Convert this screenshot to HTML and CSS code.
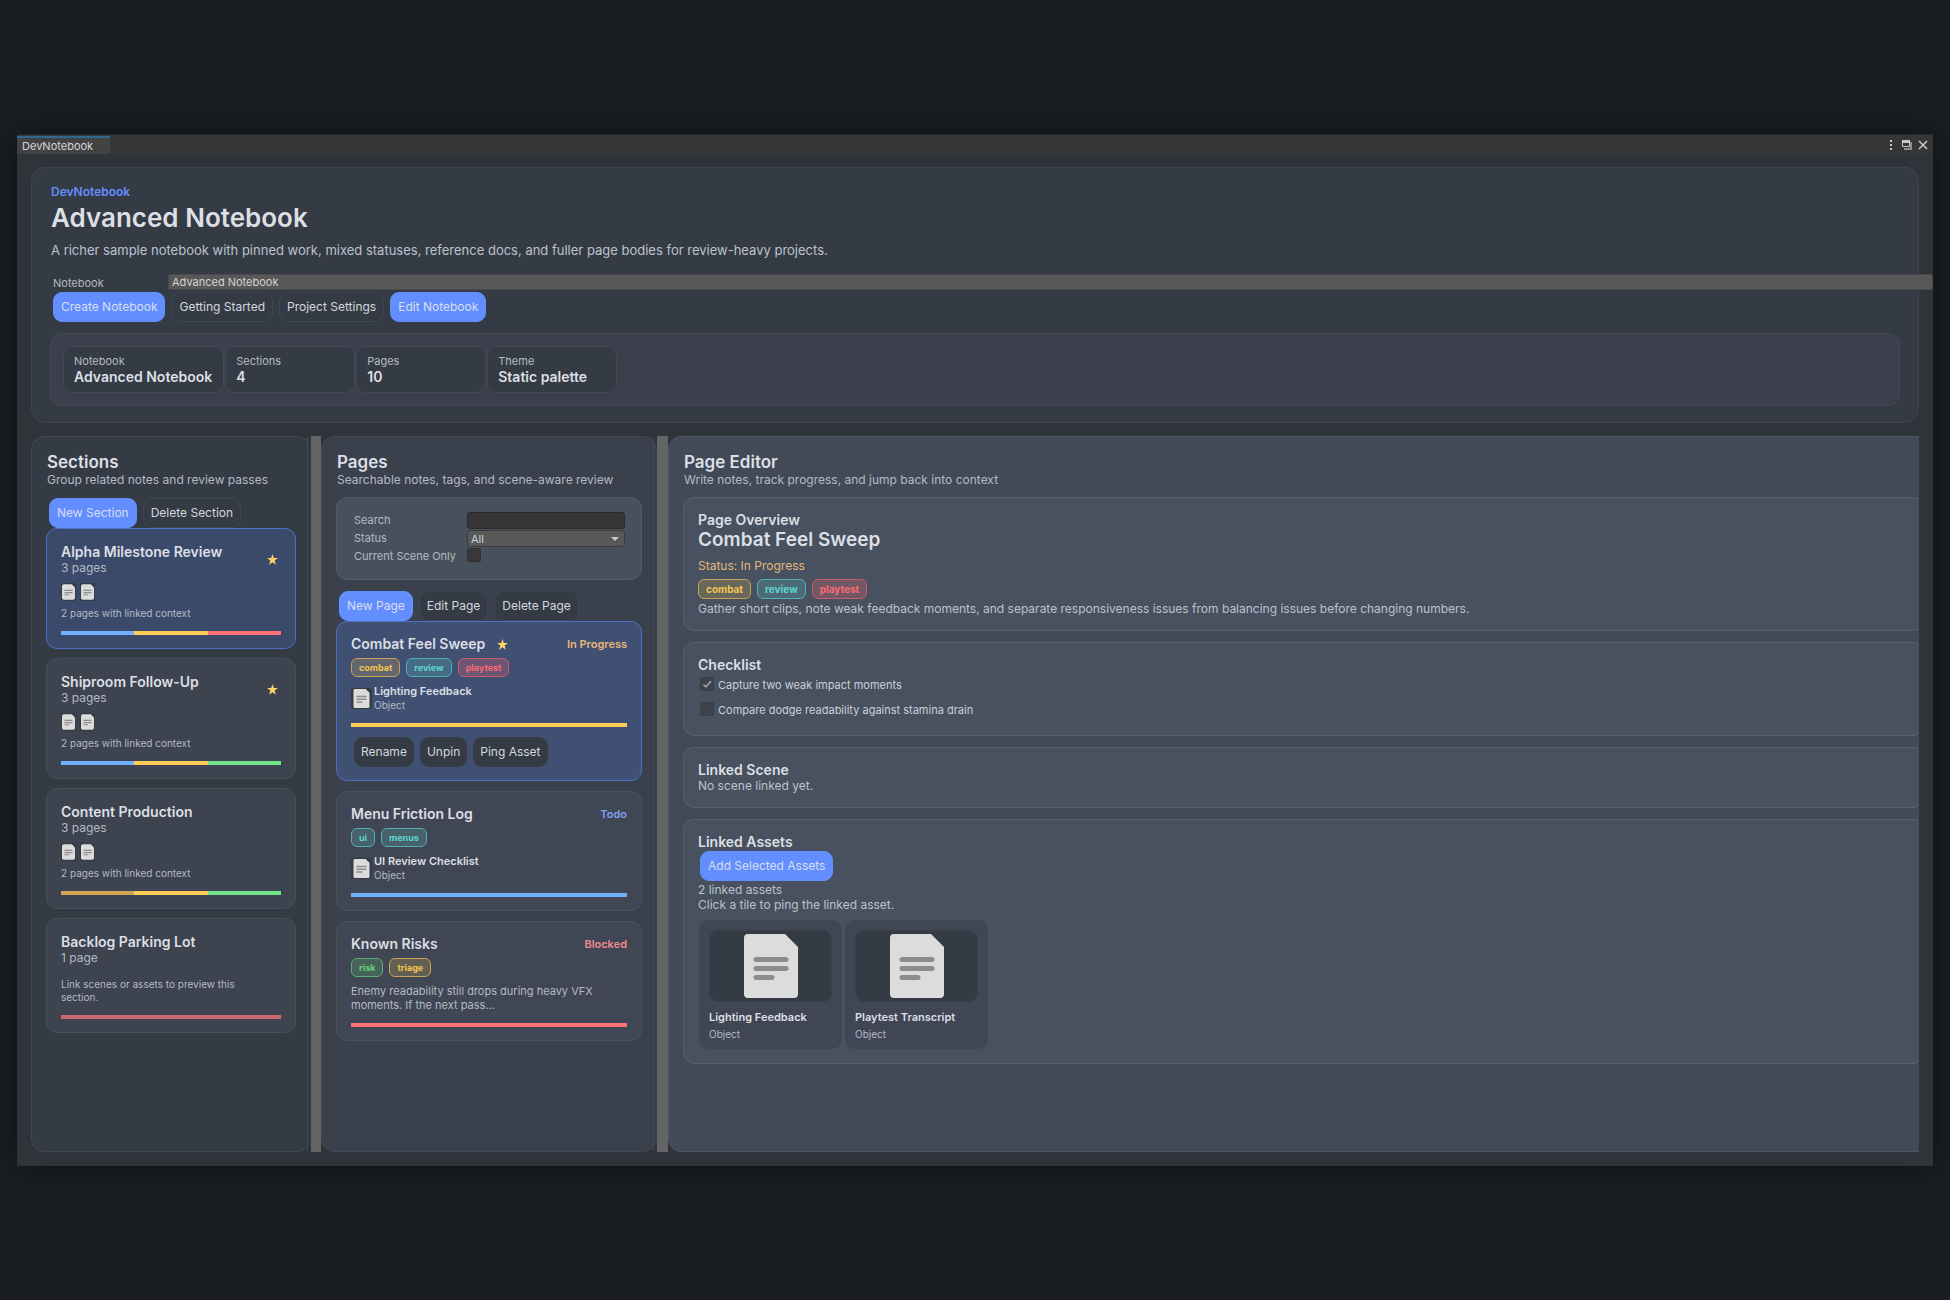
FILE: index.html
```html
<!DOCTYPE html>
<html lang="en">
<head>
<meta charset="utf-8">
<meta name="viewport" content="width=device-width, initial-scale=1">
<title>DevNotebook</title>
<link rel="stylesheet" href="styles.css">
</head>
<body>
<svg class="defs" aria-hidden="true">
  <symbol id="doc" viewBox="0 0 54 64">
    <path fill="#dcdcdc" d="M4 0H41L54 13V60a4 4 0 0 1-4 4H4a4 4 0 0 1-4-4V4a4 4 0 0 1 4-4Z"/>
    <path stroke="#8c8c8c" stroke-width="5" stroke-linecap="round" d="M12 25.500H42M12 34.500H42M12 43.500H28"/>
  </symbol>
  <symbol id="star" viewBox="0 0 24 24">
    <path fill="#ffd166" d="M12 0l2.900 8.900H24l-7.400 5.500L19.400 23.500 12 18l-7.400 5.500 2.800-9.100L0 8.900h9.100Z"/>
  </symbol>
</svg>
<div class="window">
  <div class="titlebar">
    <div class="tab">DevNotebook</div>
    <div class="window-actions">
      <button class="icon-button" type="button" aria-label="Menu"><svg width="10" height="12" viewBox="0 0 10 12"><path fill="#c8c8c8" d="M4 1h2v2H4zM4 5h2v2H4zM4 9h2v2H4z"/></svg></button>
      <button class="icon-button" type="button" aria-label="Maximize"><svg width="10" height="10" viewBox="0 0 10 10"><path fill="#8f8f8f" d="M8 2h2v8H2V8h6z"/><path fill="none" stroke="#c8c8c8" d="M.5.5h7v6h-7z"/><path fill="#c8c8c8" d="M0 0h8v3H0z"/></svg></button>
      <button class="icon-button" type="button" aria-label="Close"><svg width="10" height="10" viewBox="0 0 10 10"><path stroke="#c8c8c8" stroke-width="1.600" d="M1 1l8 8M9 1L1 9"/></svg></button>
    </div>
  </div>
  <div class="content">
    <header class="hero">
      <div class="intro">
        <p class="eyebrow">DevNotebook</p>
        <h1>Advanced Notebook</h1>
        <p class="lead">A richer sample notebook with pinned work, mixed statuses, reference docs, and fuller page bodies for review-heavy projects.</p>
      </div>
      <div class="notebook-field">
        <label for="notebook">Notebook</label>
        <select id="notebook" class="field"><option>Advanced Notebook</option></select>
      </div>
      <div class="buttons">
        <button class="btn primary" type="button">Create Notebook</button>
        <button class="btn" type="button">Getting Started</button>
        <button class="btn" type="button">Project Settings</button>
        <button class="btn primary" type="button">Edit Notebook</button>
      </div>
      <dl class="stats">
        <div class="stat"><dt>Notebook</dt><dd>Advanced Notebook</dd></div>
        <div class="stat"><dt>Sections</dt><dd>4</dd></div>
        <div class="stat"><dt>Pages</dt><dd>10</dd></div>
        <div class="stat"><dt>Theme</dt><dd>Static palette</dd></div>
      </dl>
    </header>

    <main class="workspace">
      <section class="panel sections">
        <div class="panel-body">
          <h2>Sections</h2>
          <p class="sub">Group related notes and review passes</p>
          <div class="buttons">
            <button class="btn primary" type="button">New Section</button>
            <button class="btn" type="button">Delete Section</button>
          </div>
          <div class="cards">
            <article class="card selected">
              <div class="card-head"><div><h3>Alpha Milestone Review</h3><p>3 pages</p></div><svg class="star"><use href="#star"/></svg></div>
              <div class="thumbs"><svg><use href="#doc"/></svg><svg><use href="#doc"/></svg></div>
              <p class="note">2 pages with linked context</p>
              <div class="bar"><i class="todo"></i><i class="progress"></i><i class="blocked"></i></div>
            </article>
            <article class="card">
              <div class="card-head"><div><h3>Shiproom Follow-Up</h3><p>3 pages</p></div><svg class="star"><use href="#star"/></svg></div>
              <div class="thumbs"><svg><use href="#doc"/></svg><svg><use href="#doc"/></svg></div>
              <p class="note">2 pages with linked context</p>
              <div class="bar"><i class="todo"></i><i class="progress"></i><i class="done"></i></div>
            </article>
            <article class="card">
              <div class="card-head"><div><h3>Content Production</h3><p>3 pages</p></div></div>
              <div class="thumbs"><svg><use href="#doc"/></svg><svg><use href="#doc"/></svg></div>
              <p class="note">2 pages with linked context</p>
              <div class="bar"><i class="progress dim"></i><i class="progress"></i><i class="done"></i></div>
            </article>
            <article class="card">
              <div class="card-head"><div><h3>Backlog Parking Lot</h3><p>1 page</p></div></div>
              <p class="note empty">Link scenes or assets to preview this section.</p>
              <div class="bar"><i class="blocked dim"></i></div>
            </article>
          </div>
        </div>
      </section>
      <div class="splitter"></div>

      <section class="panel pages">
        <div class="panel-body">
          <h2>Pages</h2>
          <p class="sub">Searchable notes, tags, and scene-aware review</p>
          <form class="filters">
            <label for="search">Search</label>
            <input id="search" class="text-input" type="text">
            <label for="status">Status</label>
            <span class="dropdown"><select id="status" class="field"><option>All</option></select></span>
            <label for="scene">Current Scene Only</label>
            <input id="scene" class="check" type="checkbox">
          </form>
          <div class="buttons">
            <button class="btn primary" type="button">New Page</button>
            <button class="btn" type="button">Edit Page</button>
            <button class="btn" type="button">Delete Page</button>
          </div>
          <div class="cards">
            <article class="card selected">
              <div class="page-head"><h3>Combat Feel Sweep</h3><svg class="star"><use href="#star"/></svg><span class="state amber">In Progress</span></div>
              <div class="tags"><span class="tag gold">combat</span><span class="tag teal">review</span><span class="tag red">playtest</span></div>
              <div class="asset-ref"><svg><use href="#doc"/></svg><div><strong>Lighting Feedback</strong><span>Object</span></div></div>
              <div class="bar"><i class="progress"></i></div>
              <div class="buttons card-actions">
                <button class="btn solid" type="button">Rename</button>
                <button class="btn solid" type="button">Unpin</button>
                <button class="btn solid" type="button">Ping Asset</button>
              </div>
            </article>
            <article class="card">
              <div class="page-head"><h3>Menu Friction Log</h3><span class="state blue">Todo</span></div>
              <div class="tags"><span class="tag teal">ui</span><span class="tag teal">menus</span></div>
              <div class="asset-ref"><svg><use href="#doc"/></svg><div><strong>UI Review Checklist</strong><span>Object</span></div></div>
              <div class="bar"><i class="todo"></i></div>
            </article>
            <article class="card">
              <div class="page-head"><h3>Known Risks</h3><span class="state pink">Blocked</span></div>
              <div class="tags"><span class="tag green">risk</span><span class="tag gold">triage</span></div>
              <p class="excerpt">Enemy readability still drops during heavy VFX moments. If the next pass...</p>
              <div class="bar"><i class="blocked"></i></div>
            </article>
          </div>
        </div>
      </section>
      <div class="splitter"></div>

      <section class="panel editor">
        <div class="panel-body">
          <h2>Page Editor</h2>
          <p class="sub">Write notes, track progress, and jump back into context</p>
          <div class="blocks">
            <section class="block">
              <h3>Page Overview</h3>
              <p class="page-title">Combat Feel Sweep</p>
              <p class="status-line">Status: In Progress</p>
              <div class="tags large"><span class="tag gold">combat</span><span class="tag teal">review</span><span class="tag red">playtest</span></div>
              <p class="body-text">Gather short clips, note weak feedback moments, and separate responsiveness issues from balancing issues before changing numbers.</p>
            </section>
            <section class="block checklist">
              <h3>Checklist</h3>
              <label><input class="check" type="checkbox" checked>Capture two weak impact moments</label>
              <label><input class="check" type="checkbox">Compare dodge readability against stamina drain</label>
            </section>
            <section class="block">
              <h3>Linked Scene</h3>
              <p>No scene linked yet.</p>
            </section>
            <section class="block linked-assets">
              <h3>Linked Assets</h3>
              <div class="buttons"><button class="btn primary" type="button">Add Selected Assets</button></div>
              <p>2 linked assets</p>
              <p>Click a tile to ping the linked asset.</p>
              <div class="tiles">
                <button class="tile" type="button"><span class="thumb"><svg><use href="#doc"/></svg></span><strong>Lighting Feedback</strong><span>Object</span></button>
                <button class="tile" type="button"><span class="thumb"><svg><use href="#doc"/></svg></span><strong>Playtest Transcript</strong><span>Object</span></button>
              </div>
            </section>
          </div>
        </div>
      </section>
    </main>
  </div>
</div>
</body>
</html>
```
FILE: styles.css
```css
* { box-sizing: border-box; }

body {
  margin: 0;
  min-height: 100vh;
  padding: 16px 17px;
  display: flex;
  align-items: center;
  background: #1a1e22;
  color: #d3d7de;
  font: 12px/16px Inter, "Liberation Sans", sans-serif;
}

h1, h2, h3, p, dl, dd { margin: 0; }
h1, h2, h3, strong { color: #dcdfe4; font-weight: 600; }
button, input, select { font: inherit; color: inherit; }
.defs { display: none; }

.window {
  flex: 1;
  min-width: 0;
  background: #2f343b;
  box-shadow: 0 0 28px rgba(0, 0, 0, .45);
  overflow: hidden;
}

/* Title bar */
.titlebar {
  display: flex;
  justify-content: space-between;
  height: 20px;
  background: #363636;
  border-top: 1px solid #292929;
}
.tab {
  width: 93px;
  margin-top: 1px;
  padding-left: 5px;
  border-top: 2px solid #30688f;
  background: #424242;
  font-size: 11px;
}
.window-actions {
  display: flex;
  align-items: center;
  gap: 6px;
  padding-right: 5px;
}
.icon-button {
  display: flex;
  padding: 0;
  border: 0;
  background: none;
}

.content { padding: 13px 14px 14px; }

/* Header card */
.hero {
  padding: 16px 18px;
  border: 1px solid #3f444f;
  border-radius: 14px;
  background: #353b45;
}
.intro { padding-left: 1px; }
.eyebrow { color: #628eff; font-weight: 600; }
h1 { font-size: 26px; line-height: 36px; }
.lead { margin-top: 6px; font-size: 13px; color: #bcc2cc; }
.notebook-field {
  display: grid;
  grid-template-columns: 115px 1fr;
  margin: 16px -33px 0 3px;
  font-size: 11px;
  line-height: 18px;
  color: #b4b9c1;
}
.field {
  width: 100%;
  height: 16px;
  padding: 0 3px;
  appearance: none;
  border: 1px solid #4a4a4a;
  border-radius: 2px;
  background: #585858;
  color: #d2d2d2;
  font-size: 11px;
  line-height: 14px;
}

/* Buttons */
.buttons {
  display: flex;
  gap: 6px;
  padding-left: 3px;
}
.btn {
  height: 30px;
  padding: 0 7px;
  border: 1px solid #404651;
  border-radius: 9px;
  background: #353b45;
  color: #d3d7de;
}
.btn.primary { border-color: #628eff; background: #628eff; color: #d9def0; }
.btn.solid { padding: 0 6px; border-color: #373c44; }

.stats {
  display: flex;
  gap: 1px;
  margin-top: 11px;
  padding: 12px;
  border: 1px solid #444a57;
  border-radius: 12px;
  background: #3b404c;
}
.stat {
  min-width: 130px;
  padding: 7px 11px 7px 10px;
  border: 1px solid #434956;
  border-radius: 9px;
  background: #353b45;
}
.stat dt { font-size: 11px; line-height: 15px; color: #b4bac5; }
.stat dd { font-size: 14px; font-weight: 600; color: #dcdfe4; }

/* Three-pane workspace */
.workspace {
  display: grid;
  grid-template-columns: 280px 10px 336px 11px minmax(0, 1fr);
  min-height: 716px;
  margin-top: 13px;
}
.splitter { background: #646464; }
.panel {
  display: flex;
  border: 1px solid #424854;
  border-right: 0;
  border-radius: 14px;
  padding-right: 3px;
  background: #353b45;
}
.panel-body {
  flex: 1;
  min-width: 0;
  padding: 15px 11px 15px 14px;
  border-right: 1px solid #424854;
}
.pages { background: #3a404c; }
.editor {
  padding: 0;
  border-color: #4e5664;
  border-radius: 14px 0 0 14px;
  background: #424957;
  overflow: hidden;
}
.editor .panel-body { margin-right: -5px; padding-right: 0; border: 0; }

h2 { padding-left: 1px; font-size: 17px; line-height: 20px; }
.sub { padding-left: 1px; color: #b4bac5; }
.sections .buttons { margin-top: 10px; }

.cards { display: grid; gap: 9px; }
.card {
  padding: 14px 14px 13px;
  border: 1px solid #484e5a;
  border-radius: 11px;
  background: #3d434f;
}
.sections .card.selected { border-color: #4c70c4; background: #3b4a6b; }
.card-head {
  display: flex;
  align-items: center;
  justify-content: space-between;
  line-height: 15px;
  color: #b4bac5;
}
.card-head h3 { font-size: 14px; line-height: 17px; }
.star { width: 11px; height: 11px; flex: none; }
.card-head .star { margin-right: 3px; }
.thumbs { display: flex; gap: 4px; margin: 8px 0 6px; }
.thumbs svg {
  width: 15px;
  height: 18px;
  padding: 1px;
  border-radius: 3px;
  background: #343a42;
}
.note { font-size: 10px; line-height: 13px; color: #b4bac5; }
.note.empty { margin-top: 13px; padding-right: 20px; }
.bar { display: flex; height: 4px; margin-top: 11px; }
.bar i { flex: 1; }
.todo { background: #6fb1ff; }
.progress { background: #ffcc58; }
.blocked { background: #ff7376; }
.done { background: #70e48a; }
.progress.dim { background: #cfa454; }
.blocked.dim { background: #cb666b; }

/* Pages pane */
.filters {
  display: grid;
  grid-template: 17px 17px 15px / 113px 1fr;
  row-gap: 1px;
  margin-top: 9px;
  padding: 14px 16px 16px 17px;
  border: 1px solid #515c69;
  border-radius: 11px;
  background: #47515e;
  color: #b4bac1;
  font-size: 11px;
}
.text-input {
  width: 100%;
  height: 17px;
  padding: 0 3px;
  border: 1px solid #2a2a2a;
  border-radius: 3px;
  background: #363636;
}
.dropdown { display: grid; align-items: center; }
.dropdown .field { grid-area: 1 / 1; height: 17px; border-color: #3c3c3c; border-radius: 3px; }
.dropdown::after {
  content: "";
  grid-area: 1 / 1;
  justify-self: end;
  margin-right: 6px;
  border: 4px solid transparent;
  border-top-color: #c8c8c8;
  border-bottom: 0;
  pointer-events: none;
}
.check {
  width: 14px;
  height: 14px;
  margin: 0;
  appearance: none;
  border: 1px solid #303030;
  border-radius: 2px;
  background: #383838;
}
.pages .panel-body > .buttons { margin-top: 11px; }
.pages .cards { gap: 10px; }
.pages .card { background: #404653; border-color: #4b515e; }
.pages .card.selected { border-color: #4c70c4; background: #405073; }
.page-head { display: flex; align-items: center; }
.page-head h3 { font-size: 14px; line-height: 16px; }
.page-head .star { margin-left: 12px; }
.state { margin-left: auto; font-size: 11px; font-weight: 600; }
.amber { color: #e6b878; }
.blue { color: #7e9ff0; }
.pink { color: #f08a90; }

.tags { display: flex; gap: 6px; margin-top: 6px; }
.tag {
  height: 19px;
  padding: 0 7px;
  border: 1px solid;
  border-radius: 6px;
  font-size: 9px;
  line-height: 17px;
  font-weight: 700;
}
.gold { color: #f2c453; border-color: #c9a354; background: rgba(242, 196, 83, .2); }
.teal { color: #5fd6d2; border-color: #54b0b2; background: rgba(95, 214, 210, .2); }
.red { color: #fa6b74; border-color: #c65c6c; background: rgba(250, 107, 116, .24); }
.green { color: #66d07c; border-color: #5bb070; background: rgba(102, 208, 124, .2); }
.tags.large { margin: 5px 0 2px; }
.large .tag { height: 20px; line-height: 18px; font-size: 10px; }

.asset-ref {
  display: flex;
  align-items: center;
  gap: 2px;
  margin-top: 7px;
  font-size: 11px;
  line-height: 14px;
}
.asset-ref svg {
  width: 21px;
  height: 21px;
  padding: 1px;
  border-radius: 4px;
  background: #343a42;
}
.asset-ref strong, .asset-ref span { display: block; }
.asset-ref span { font-size: 10px; color: #b4bac5; }
.card-actions { margin-top: 10px; }
.excerpt { margin-top: 7px; font-size: 11px; line-height: 14px; color: #b4bac5; }

/* Page editor */
.blocks { display: grid; gap: 11px; margin-top: 9px; }
.block {
  padding: 14px 14px 13px;
  border: 1px solid #56606e;
  border-radius: 11px;
  background: #47515f;
  color: #bcc2cc;
}
.block h3 { font-size: 14px; line-height: 16px; }
.page-title { font-size: 19px; line-height: 24px; font-weight: 600; color: #dcdfe4; }
.status-line { margin-top: 6px; color: #e6b878; }
.checklist { display: grid; padding-bottom: 17px; }
.checklist label {
  display: flex;
  gap: 4px;
  margin: 4px 0 5px 2px;
  font-size: 11px;
  color: #ccd0d7;
}
.checklist label:last-child { margin-bottom: 0; }
.checklist .check { border-color: #3b4047; background: #3e434b; }
.checklist .check:checked {
  background: #3e434b url("data:image/svg+xml,%3Csvg xmlns='http://www.w3.org/2000/svg' viewBox='0 0 12 12'%3E%3Cpath fill='none' stroke='%23a4a9b0' stroke-width='1.500' d='M2.500 6.500l2.500 2.500 5-6'/%3E%3C/svg%3E");
}
.linked-assets .buttons { margin: 1px 0; padding-left: 2px; }
.linked-assets p { line-height: 15px; }
.tiles { display: flex; gap: 1px; margin-top: 7px; }
.tile {
  display: flex;
  flex-direction: column;
  width: 145px;
  padding: 10px 10px 8px;
  border: 1px solid #4a505e;
  border-radius: 11px;
  background: #404654;
  text-align: left;
  font-size: 11px;
  line-height: 14px;
}
.tile > span:last-child { margin-top: 3px; font-size: 10px; color: #b4bac5; }
.thumb {
  display: flex;
  justify-content: center;
  margin-bottom: 8px;
  padding: 3px 0;
  border: 1px solid #3a404a;
  border-radius: 9px;
  background: #353b45;
}
.thumb svg { width: 54px; height: 64px; }
```
